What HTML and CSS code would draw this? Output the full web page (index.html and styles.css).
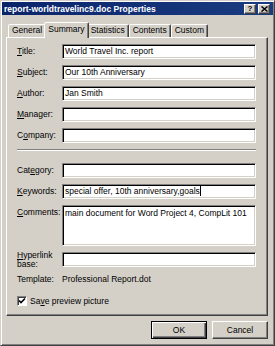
FILE: index.html
```html
<!DOCTYPE html>
<html lang="en">
<head>
    <meta charset="UTF-8">
    <title>report-worldtravelinc9.doc Properties</title>
    <link rel="stylesheet" href="styles.css">
</head>
<body>
    <div class="window">
        <div class="titlebar">
            <span class="title">report-worldtravelinc9.doc Properties</span>
            <div class="title-buttons">
                <span class="tbtn">?</span>
                <span class="tbtn">
                    <svg width="7" height="6" viewBox="0 0 7 6"><path d="M0.5 0.5 L6.5 5.5 M6.5 0.5 L0.5 5.5" stroke="#000" stroke-width="1.5"/></svg>
                </span>
            </div>
        </div>

        <div class="content">
            <div class="tabs">
                <div class="tab">General</div>
                <div class="tab active">Summary</div>
                <div class="tab">Statistics</div>
                <div class="tab">Contents</div>
                <div class="tab">Custom</div>
            </div>

            <div class="panel">
                <div class="field">
                    <span class="label"><u>T</u>itle:</span>
                    <div class="input">World Travel Inc. report</div>
                </div>
                <div class="field">
                    <span class="label"><u>S</u>ubject:</span>
                    <div class="input">Our 10th Anniversary</div>
                </div>
                <div class="field">
                    <span class="label"><u>A</u>uthor:</span>
                    <div class="input">Jan Smith</div>
                </div>
                <div class="field">
                    <span class="label"><u>M</u>anager:</span>
                    <div class="input"></div>
                </div>
                <div class="field">
                    <span class="label">C<u>o</u>mpany:</span>
                    <div class="input"></div>
                </div>

                <div class="separator"></div>

                <div class="field">
                    <span class="label">Cat<u>e</u>gory:</span>
                    <div class="input"></div>
                </div>
                <div class="field">
                    <span class="label"><u>K</u>eywords:</span>
                    <div class="input">special offer, 10th anniversary,goals<span class="caret"></span></div>
                </div>
                <div class="field">
                    <span class="label"><u>C</u>omments:</span>
                    <div class="input textarea">main document for Word Project 4, CompLit 101</div>
                </div>
                <div class="field field-hyperlink">
                    <span class="label label-2line"><u>H</u>yperlink<br>base:</span>
                    <div class="input"></div>
                </div>
                <div class="field field-template">
                    <span class="label">Template:</span>
                    <span class="value">Professional Report.dot</span>
                </div>

                <div class="check-row">
                    <span class="checkbox">
                        <svg width="8" height="8" viewBox="0 0 8 8"><path d="M1 3.5 L3 5.5 L7 1.5" fill="none" stroke="#000" stroke-width="1.6"/></svg>
                    </span>
                    <span>Sa<u>v</u>e preview picture</span>
                </div>
            </div>

            <div class="buttons">
                <div class="btn default">OK</div>
                <div class="btn">Cancel</div>
            </div>
        </div>
    </div>
</body>
</html>
```

FILE: styles.css
```css
* {
    box-sizing: border-box;
}
body {
    margin: 0;
    font-family: "Liberation Sans", Arial, sans-serif;
    font-size: 8.5px;
    color: #000;
    background: #d4d0c8;
}
.window {
    width: 275px;
    height: 346px;
    background: #d4d0c8;
    border: 1px solid;
    border-color: #d4d0c8 #404040 #404040 #d4d0c8;
    box-shadow: inset 1px 1px #fff, inset -1px -1px #808080;
    padding: 1px;
    display: flex;
    flex-direction: column;
}
.titlebar {
    height: 13px;
    background: linear-gradient(to right, #0a246a, #1b3c82);
    color: #fff;
    font-weight: bold;
    display: flex;
    align-items: center;
    justify-content: space-between;
    padding: 0 3px 0 2px;
}
.title-buttons {
    display: flex;
    gap: 2px;
}
.tbtn {
    width: 12px;
    height: 10px;
    background: #d4d0c8;
    border: 1px solid;
    border-color: #fff #404040 #404040 #fff;
    box-shadow: inset -1px -1px #808080;
    color: #000;
    font-size: 8px;
    font-weight: bold;
    line-height: 8px;
    display: flex;
    align-items: center;
    justify-content: center;
}
.content {
    flex: 1;
    padding: 0 5px 0 4px;
    display: flex;
    flex-direction: column;
}

/* tabs */
.tabs {
    display: flex;
    height: 23px;
    padding: 7px 0 0 2px;
}
.tab {
    height: 13px;
    margin-top: 2px;
    padding: 0 3px;
    border: 1px solid;
    border-bottom: none;
    border-color: #fff #404040 transparent #fff;
    border-radius: 2px 2px 0 0;
    box-shadow: inset -1px 0 #808080;
    line-height: 11px;
    background: #d4d0c8;
    white-space: nowrap;
}
.tab.active {
    height: 16px;
    margin: 0 -2px;
    padding: 1px 3px 0;
    position: relative;
    z-index: 2;
}

/* property sheet */
.panel {
    height: 279px;
    margin-top: -1px;
    border: 1px solid;
    border-color: #fff #404040 #404040 #fff;
    box-shadow: inset -1px -1px #808080;
    padding: 6px 11px 0 10px;
}
.field {
    display: flex;
    align-items: flex-start;
    margin-bottom: 6px;
}
.label {
    width: 45px;
    flex-shrink: 0;
    line-height: 15px;
    white-space: nowrap;
}
.label-2line {
    line-height: 9px;
    margin-top: -1px;
}
.input {
    flex: 1;
    height: 15px;
    background: #fff;
    border: 1px solid;
    border-color: #808080 #fff #fff #808080;
    box-shadow: inset 1px 1px #000, inset -1px -1px #d4d0c8;
    padding: 0 2px;
    line-height: 13px;
    white-space: nowrap;
    overflow: hidden;
}
.textarea {
    height: 41px;
    white-space: normal;
    padding-top: 1px;
}
.caret {
    display: inline-block;
    width: 1px;
    height: 10px;
    background: #000;
    vertical-align: -2px;
}
.separator {
    height: 2px;
    margin: 4px 0 12px;
    border-top: 1px solid #808080;
    border-bottom: 1px solid #fff;
}
.field-hyperlink {
    margin-top: 4px;
}
.field-template {
    margin-bottom: 0;
    align-items: center;
    height: 10px;
    margin-top: -1px;
}
.value {
    line-height: 10px;
}
.check-row {
    display: flex;
    align-items: center;
    gap: 3px;
    margin-top: 12px;
}
.checkbox {
    width: 10px;
    height: 10px;
    background: #fff;
    border: 1px solid;
    border-color: #808080 #fff #fff #808080;
    box-shadow: inset 1px 1px #404040;
    display: flex;
    align-items: center;
    justify-content: center;
}

/* dialog buttons */
.buttons {
    display: flex;
    justify-content: flex-end;
    gap: 5px;
    margin-top: 5px;
}
.btn {
    width: 56px;
    height: 18px;
    border: 1px solid;
    border-color: #fff #404040 #404040 #fff;
    box-shadow: inset -1px -1px #808080;
    display: flex;
    align-items: center;
    justify-content: center;
}
.btn.default {
    border-color: #000;
    box-shadow: inset 1px 1px #fff, inset -1px -1px #404040, inset -2px -2px #808080;
}
```
